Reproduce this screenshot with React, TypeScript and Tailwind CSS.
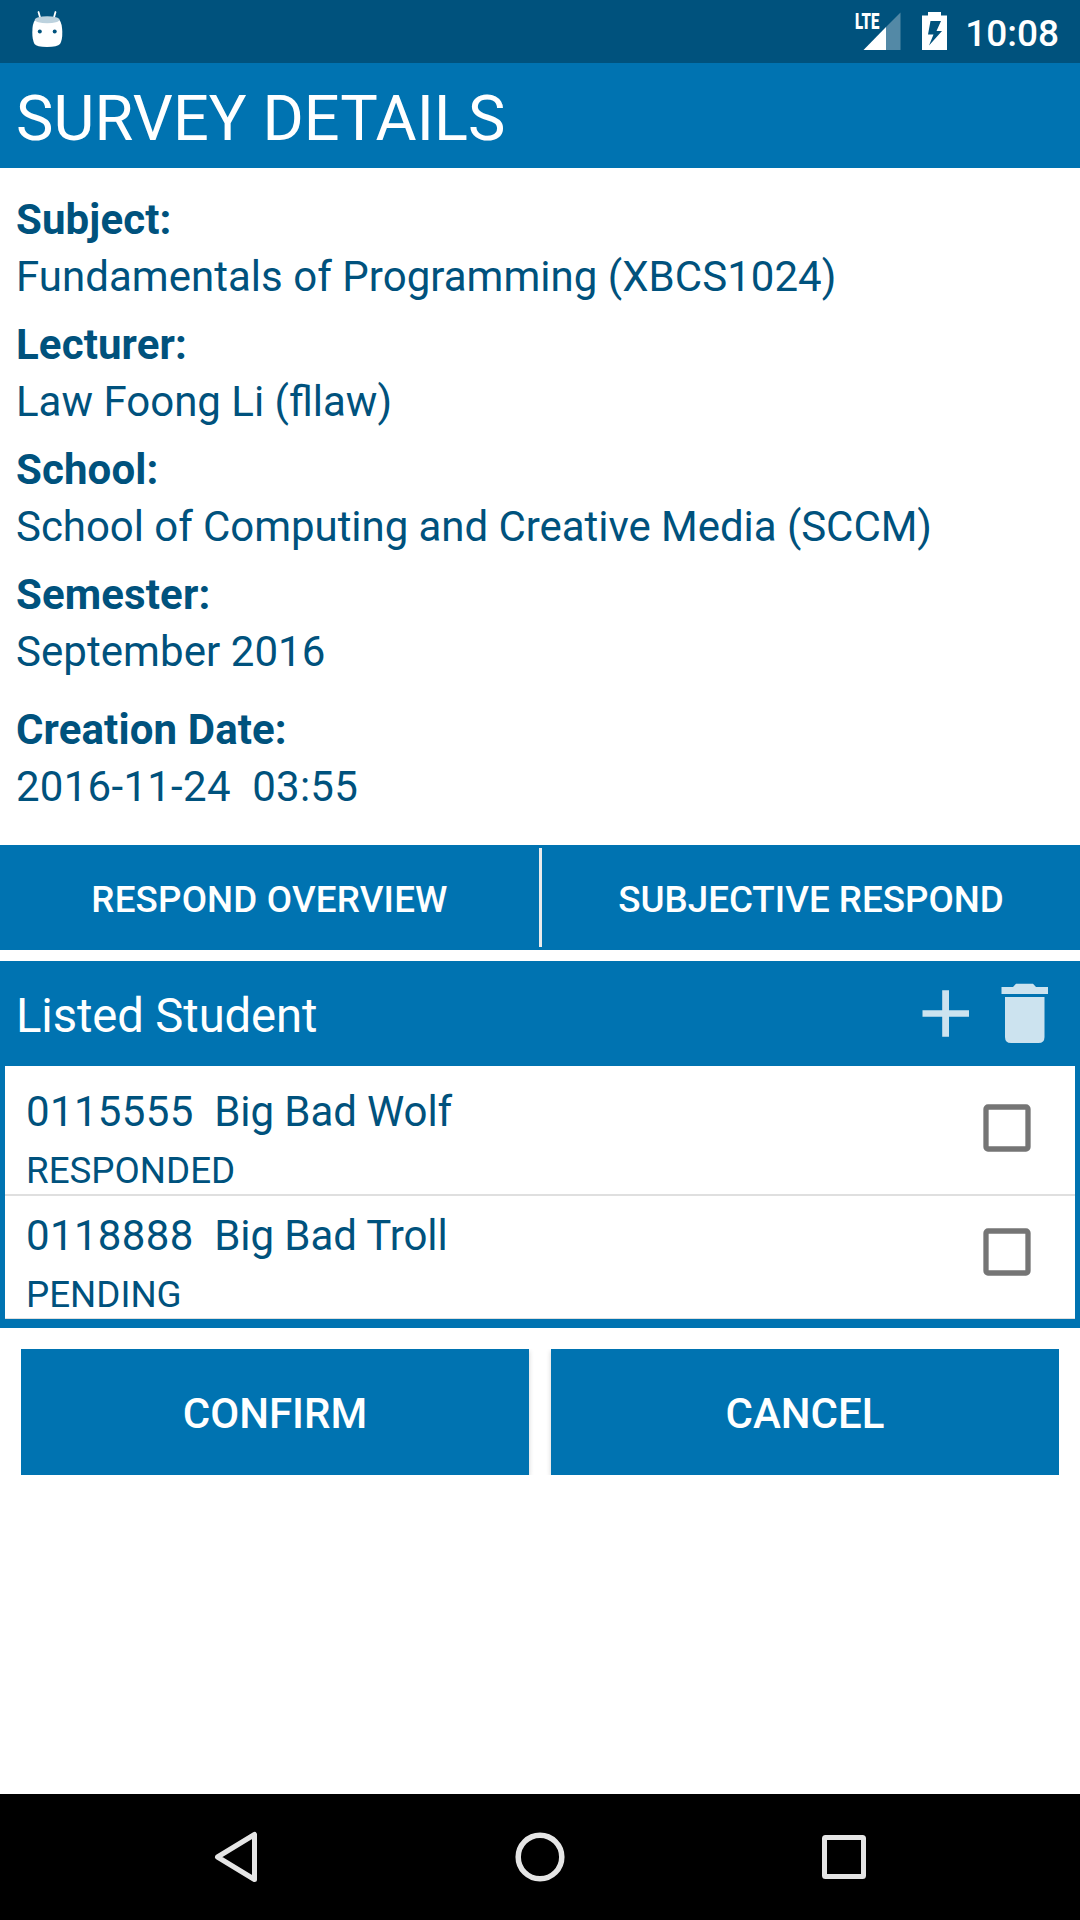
import React from "react";

const details = [
  { label: "Subject:", value: "Fundamentals of Programming (XBCS1024)", gap: "mt-[23px]", spacing: "tracking-[0.03px]" },
  { label: "Lecturer:", value: "Law Foong Li (fllaw)", gap: "mt-[11px]", spacing: "" },
  { label: "School:", value: "School of Computing and Creative Media (SCCM)", gap: "mt-[11px]", spacing: "tracking-[-0.05px]" },
  { label: "Semester:", value: "September 2016", gap: "mt-[11px]", spacing: "tracking-[0.06px]" },
  { label: "Creation Date:", value: "2016-11-24  03:55", gap: "mt-[21px]", spacing: "tracking-[0.27px]" },
];

const students = [
  { id: "0115555", name: "Big Bad Wolf", status: "RESPONDED", row: "h-[130px] border-b-2 pt-[17px]" },
  { id: "0118888", name: "Big Bad Troll", status: "PENDING", row: "h-[123px] border-b pt-[11px]" },
];

function StatusBar() {
  return (
    <div className="flex h-[63px] items-start justify-between bg-[#00527d]">
      <svg className="ml-[32px] mt-[10px]" width="32" height="38" viewBox="0.5 0 32 38">
        <path d="M7 2 L9 9 M24 2 L22 9" stroke="#fff" strokeWidth="1.8" strokeLinecap="round" />
        <path d="M3.5 10 Q1 13 .8 22 Q.8 30 3 34 Q5 37 15.500 37 Q26 37 28.500 34 Q31 30 30.800 22 Q30.500 13 28 10 Z" fill="#fff" />
        <ellipse cx="15.700" cy="9.800" rx="12.400" ry="3.500" fill="#bdd2de" />
        <circle cx="8.300" cy="21.500" r="2" fill="#00527d" />
        <circle cx="23.200" cy="21.500" r="2" fill="#00527d" />
      </svg>
      <div className="flex items-start">
        <div className="relative mt-[12px] h-[38px] w-[46px]">
          <svg width="46" height="38" viewBox="0 0 46 38">
            <path d="M45.500 0.500 V38 H31 V15 Z" fill="#5389a6" />
            <path d="M31 15 V38 H8.500 Z" fill="#fff" />
          </svg>
          <span className="absolute left-0 top-px origin-top-left scale-x-[0.68] text-[22px] font-black leading-[17px]">LTE</span>
        </div>
        <svg className="ml-[21px] mt-[12px]" width="26" height="38" viewBox="0 0 26 38">
          <path fillRule="evenodd" d="M0 3.500 H6 V0 H19 V3.500 H25 V38 H0 Z M8.500 9 L6 22.500 H11.500 L7 33.500 L20 19 H14.500 L19 9 Z" fill="#fff" />
        </svg>
        <span className="ml-[17px] mr-[21px] mt-[12px] text-[37px] font-medium leading-[44px]">10:08</span>
      </div>
    </div>
  );
}

function Checkbox() {
  return (
    <button role="checkbox" aria-checked="false" className="mt-[21px] size-[48px]">
      <svg width="48" height="48" viewBox="0 0 48 48" fill="none" stroke="#757575" strokeWidth="5.300">
        <rect x="3" y="3" width="42" height="42" rx="2" />
      </svg>
    </button>
  );
}

export default function App() {
  return (
    <div className="flex h-[1920px] w-[1080px] flex-col overflow-hidden bg-white font-['Roboto',sans-serif] text-white">
      <StatusBar />
      <header className="flex h-[105px] items-center bg-[#0073b1] px-4 pt-[7px]">
        <h1 className="text-[63px] leading-[74px] tracking-[0.08px]">SURVEY DETAILS</h1>
      </header>

      <dl className="h-[677px] px-4 text-[42px] leading-[57px] text-[#00527d]">
        {details.map((d) => (
          <div key={d.label} className={`overflow-hidden ${d.gap}`}>
            <dt className="font-bold tracking-[0.12px]">{d.label}</dt>
            <dd className={`whitespace-pre [font-variant-ligatures:common-ligatures] ${d.spacing}`}>{d.value}</dd>
          </div>
        ))}
      </dl>

      <div className="flex h-[105px] items-center bg-[#0073b1] text-[36.75px] font-medium">
        <button className="h-full w-[539px] pt-[5px] tracking-[0.17px]">RESPOND OVERVIEW</button>
        <div className="h-[99px] w-[3px] bg-[#ebebeb]" />
        <button className="h-full w-[538px] pt-[5px]">SUBJECTIVE RESPOND</button>
      </div>

      <section className="mt-[11px] h-[367px] bg-[#0073b1]">
        <div className="flex h-[105px] items-center justify-between pl-4">
          <h2 className="pt-[5px] text-[47.25px] leading-[56px] tracking-[-0.12px]">Listed Student</h2>
          <svg width="160" height="105" viewBox="0 0 160 105" fill="#cce3ef">
            <path d="M22.200 29.300 H29 V49.300 H49 V55.800 H29 V75.800 H22.200 V55.800 H2.500 V49.300 H22.200 Z" />
            <path d="M81.500 26 H93 L96 22.700 H113 L116 26 H128 V33 H81.500 Z" />
            <path d="M85 36 H124.500 V76 Q124.500 82 118.500 82 H91 Q85 82 85 76 Z" />
          </svg>
        </div>
        <ul className="mx-[5px] bg-white text-[#00527d]">
          {students.map((s) => (
            <li key={s.id} className={`flex justify-between border-[#dfdfdf] pl-[21px] pr-[44px] ${s.row}`}>
              <div>
                <p className="whitespace-pre text-[42px] leading-[57px]">
                  <span className="tracking-[0.34px]">{s.id}</span>
                  <span className="tracking-[-0.09px]">{"  "}{s.name}</span>
                </p>
                <p className="pt-[4px] text-[36.75px] leading-[53px]">{s.status}</p>
              </div>
              <Checkbox />
            </li>
          ))}
        </ul>
      </section>

      <div className="mx-[21px] mt-[21px] flex h-[126px] gap-[22px] overflow-hidden text-[42px] font-medium">
        <button className="flex-1 bg-[#0073b1] pt-[2px] shadow-[0_2px_5px_rgba(0,0,0,0.18)]">CONFIRM</button>
        <button className="flex-1 bg-[#0073b1] pt-[2px] shadow-[0_2px_5px_rgba(0,0,0,0.18)]">CANCEL</button>
      </div>

      <nav className="mt-auto flex h-[126px] items-center justify-between bg-black pl-[213px] pr-[212px]">
        <svg width="47" height="54" viewBox="0 0 47 54" fill="none" stroke="#e5e5e5" strokeWidth="5" strokeLinejoin="round">
          <path d="M41.500 4.500 V49.500 L4.500 27 Z" />
        </svg>
        <svg width="54" height="54" viewBox="0 0 54 54" fill="none" stroke="#e5e5e5" strokeWidth="5.500">
          <circle cx="27" cy="27" r="21.800" />
        </svg>
        <svg width="48" height="54" viewBox="0 0 48 54" fill="none" stroke="#e5e5e5" strokeWidth="5" strokeLinejoin="round">
          <rect x="4.500" y="7.500" width="39" height="39" rx="1" />
        </svg>
      </nav>
    </div>
  );
}
